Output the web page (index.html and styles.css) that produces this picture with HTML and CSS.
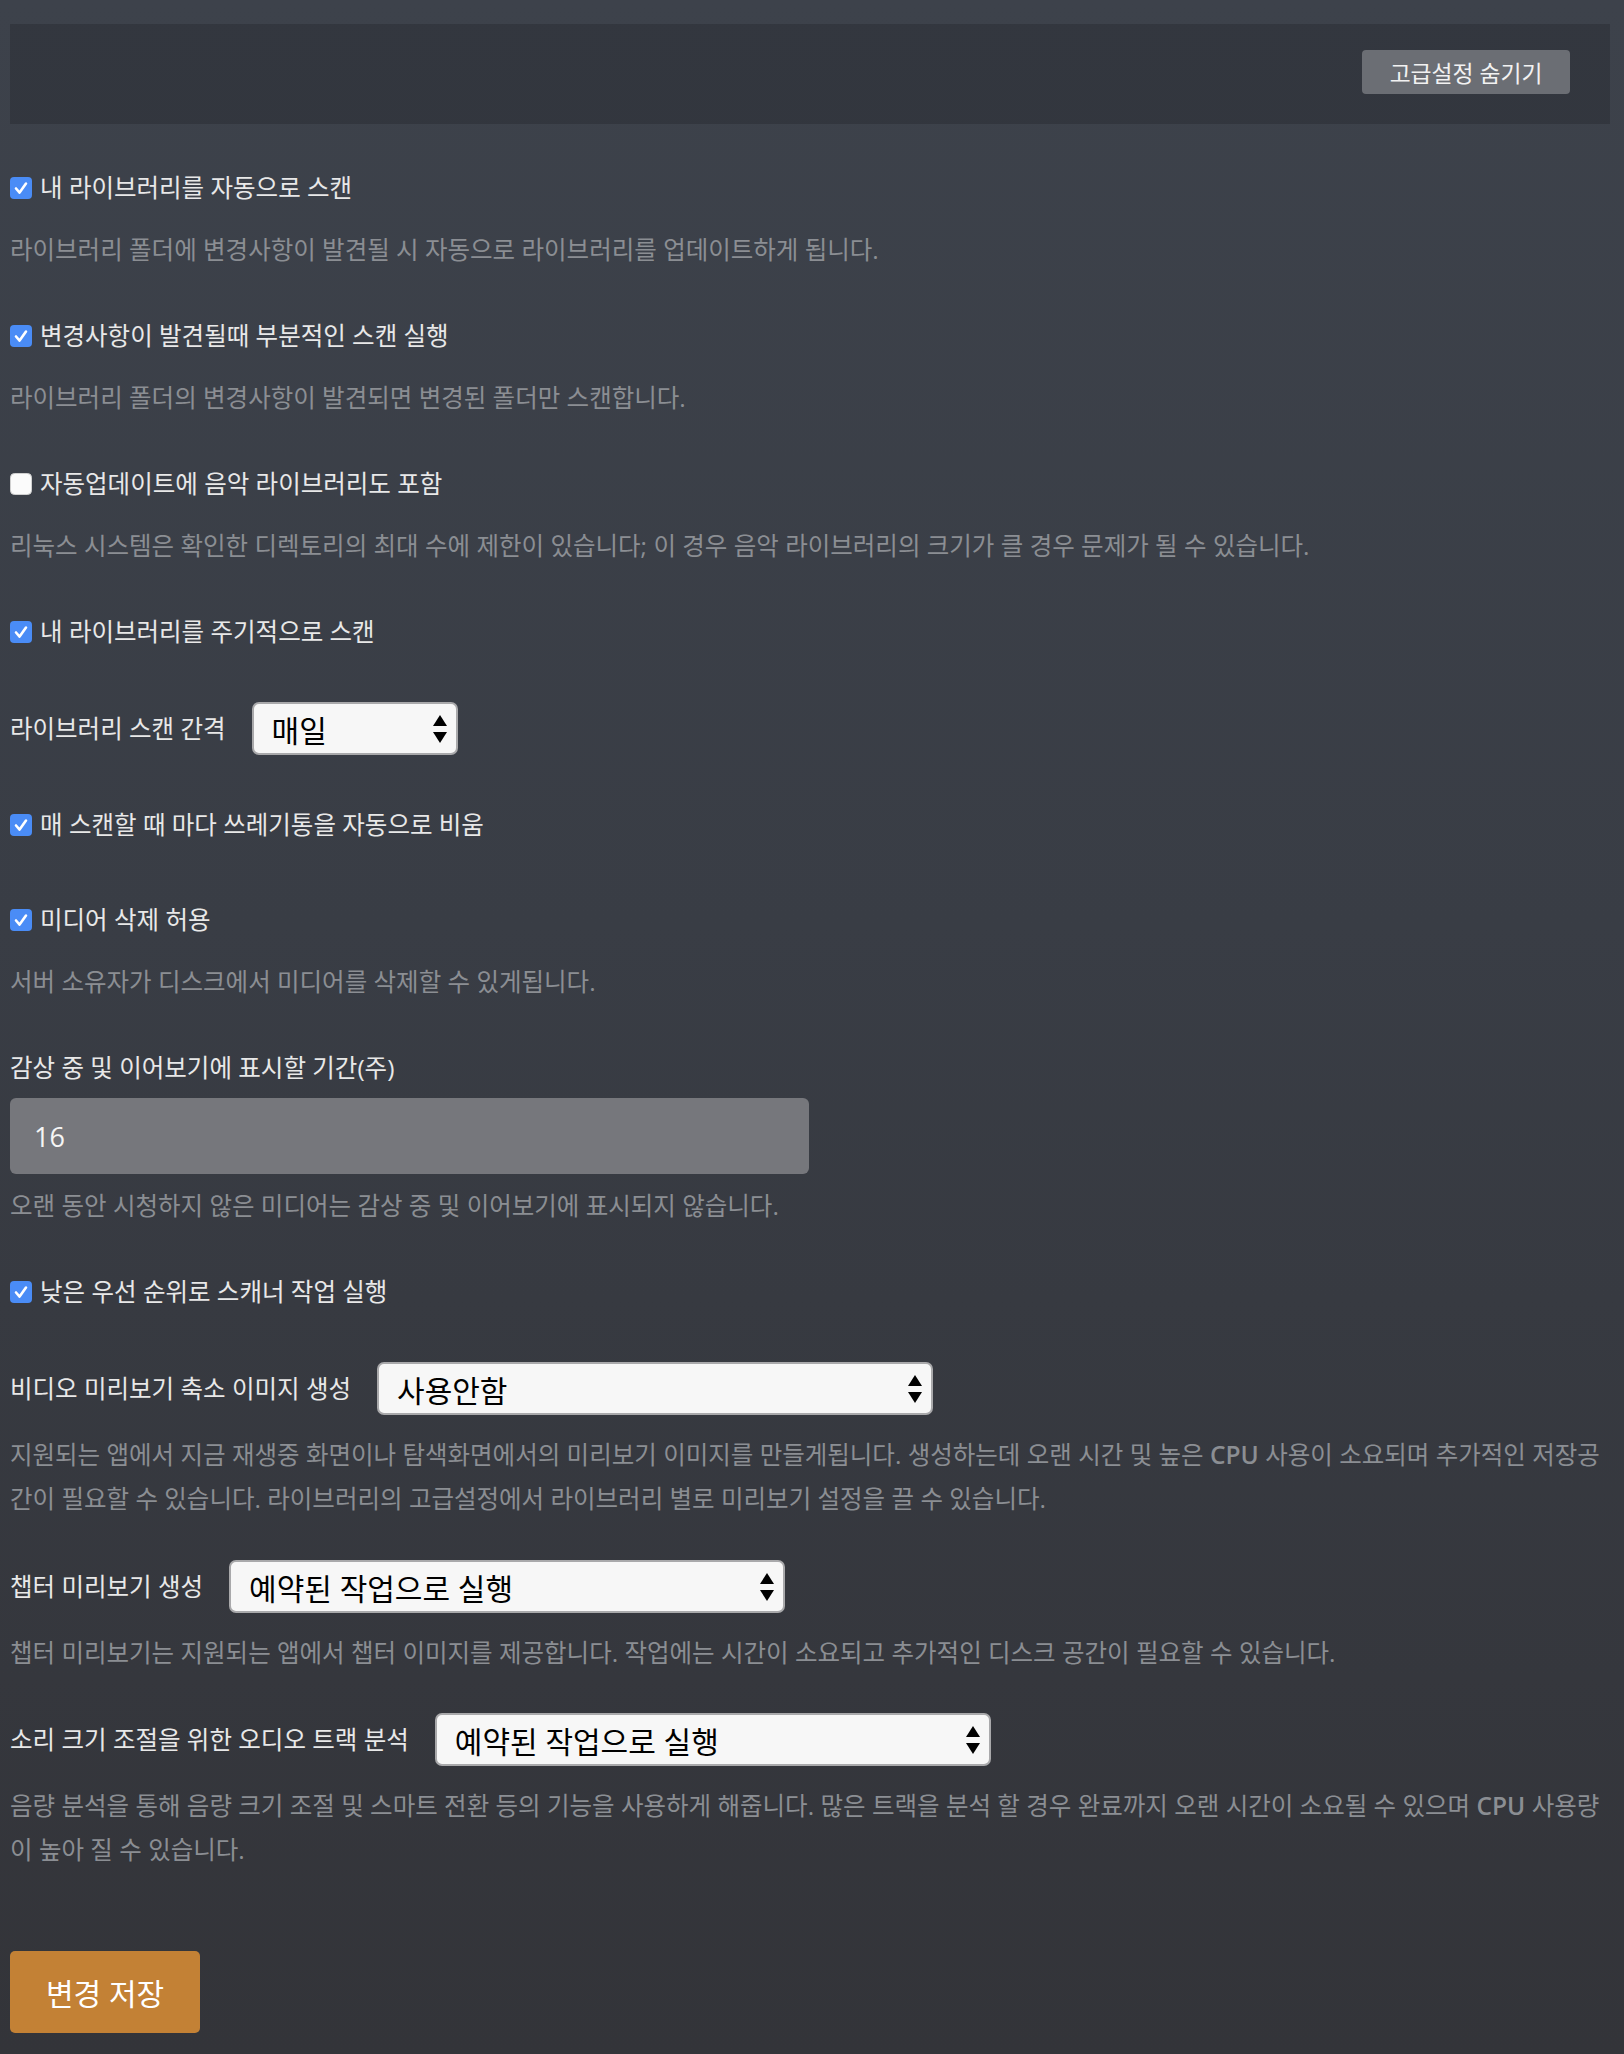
FILE: index.html
```html
<!DOCTYPE html>
<html lang="ko">
<head>
<meta charset="utf-8">
<title>라이브러리 설정</title>
<link rel="stylesheet" href="styles.css">
</head>
<body>
<div class="page">
  <div class="toolbar">
    <button class="btn-toggle" type="button">고급설정 숨기기</button>
  </div>

  <form class="settings">
    <div class="group">
      <label class="check"><span class="box"><svg viewBox="0 0 22 22" width="22" height="22"><rect x="0" y="0" width="22" height="22" rx="4" fill="#4a8cf6"/><path d="M6 11.5 L9.6 15.6 L16 6.6" fill="none" stroke="#fff" stroke-width="2.6" stroke-linecap="round" stroke-linejoin="round"/></svg></span>내 라이브러리를 자동으로 스캔</label>
      <p class="help">라이브러리 폴더에 변경사항이 발견될 시 자동으로 라이브러리를 업데이트하게 됩니다.</p>
    </div>

    <div class="group">
      <label class="check"><span class="box"><svg viewBox="0 0 22 22" width="22" height="22"><rect x="0" y="0" width="22" height="22" rx="4" fill="#4a8cf6"/><path d="M6 11.5 L9.6 15.6 L16 6.6" fill="none" stroke="#fff" stroke-width="2.6" stroke-linecap="round" stroke-linejoin="round"/></svg></span>변경사항이 발견될때 부분적인 스캔 실행</label>
      <p class="help">라이브러리 폴더의 변경사항이 발견되면 변경된 폴더만 스캔합니다.</p>
    </div>

    <div class="group">
      <label class="check"><span class="box"><svg viewBox="0 0 22 22" width="22" height="22"><rect x="0.5" y="0.5" width="21" height="21" rx="4" fill="#fbfbfb" stroke="#d0d0d0"/></svg></span>자동업데이트에 음악 라이브러리도 포함</label>
      <p class="help">리눅스 시스템은 확인한 디렉토리의 최대 수에 제한이 있습니다; 이 경우 음악 라이브러리의 크기가 클 경우 문제가 될 수 있습니다.</p>
    </div>

    <div class="group nohelp">
      <label class="check"><span class="box"><svg viewBox="0 0 22 22" width="22" height="22"><rect x="0" y="0" width="22" height="22" rx="4" fill="#4a8cf6"/><path d="M6 11.5 L9.6 15.6 L16 6.6" fill="none" stroke="#fff" stroke-width="2.6" stroke-linecap="round" stroke-linejoin="round"/></svg></span>내 라이브러리를 주기적으로 스캔</label>
    </div>

    <div class="group nohelp">
      <div class="inline">
        <span class="label">라이브러리 스캔 간격</span>
        <div class="select select-sm"><span>매일</span><svg viewBox="0 0 14 28" width="14" height="28"><polygon points="7,0 14,11 0,11" fill="#000"/><polygon points="0,17 14,17 7,28" fill="#000"/></svg></div>
      </div>
    </div>

    <div class="group nohelp loose">
      <label class="check"><span class="box"><svg viewBox="0 0 22 22" width="22" height="22"><rect x="0" y="0" width="22" height="22" rx="4" fill="#4a8cf6"/><path d="M6 11.5 L9.6 15.6 L16 6.6" fill="none" stroke="#fff" stroke-width="2.6" stroke-linecap="round" stroke-linejoin="round"/></svg></span>매 스캔할 때 마다 쓰레기통을 자동으로 비움</label>
    </div>

    <div class="group">
      <label class="check"><span class="box"><svg viewBox="0 0 22 22" width="22" height="22"><rect x="0" y="0" width="22" height="22" rx="4" fill="#4a8cf6"/><path d="M6 11.5 L9.6 15.6 L16 6.6" fill="none" stroke="#fff" stroke-width="2.6" stroke-linecap="round" stroke-linejoin="round"/></svg></span>미디어 삭제 허용</label>
      <p class="help">서버 소유자가 디스크에서 미디어를 삭제할 수 있게됩니다.</p>
    </div>

    <div class="group">
      <span class="label block">감상 중 및 이어보기에 표시할 기간(주)</span>
      <div class="text-input">16</div>
      <p class="help help-input">오랜 동안 시청하지 않은 미디어는 감상 중 및 이어보기에 표시되지 않습니다.</p>
    </div>

    <div class="group nohelp">
      <label class="check"><span class="box"><svg viewBox="0 0 22 22" width="22" height="22"><rect x="0" y="0" width="22" height="22" rx="4" fill="#4a8cf6"/><path d="M6 11.5 L9.6 15.6 L16 6.6" fill="none" stroke="#fff" stroke-width="2.6" stroke-linecap="round" stroke-linejoin="round"/></svg></span>낮은 우선 순위로 스캐너 작업 실행</label>
    </div>

    <div class="group snug">
      <div class="inline">
        <span class="label">비디오 미리보기 축소 이미지 생성</span>
        <div class="select select-lg"><span>사용안함</span><svg viewBox="0 0 14 28" width="14" height="28"><polygon points="7,0 14,11 0,11" fill="#000"/><polygon points="0,17 14,17 7,28" fill="#000"/></svg></div>
      </div>
      <p class="help help-select">지원되는 앱에서 지금 재생중 화면이나 탐색화면에서의 미리보기 이미지를 만들게됩니다. 생성하는데 오랜 시간 및 높은 <span class="latin">CPU</span> 사용이 소요되며 추가적인 저장공간이 필요할 수 있습니다. 라이브러리의 고급설정에서 라이브러리 별로 미리보기 설정을 끌 수 있습니다.</p>
    </div>

    <div class="group tight">
      <div class="inline">
        <span class="label">챕터 미리보기 생성</span>
        <div class="select select-lg"><span>예약된 작업으로 실행</span><svg viewBox="0 0 14 28" width="14" height="28"><polygon points="7,0 14,11 0,11" fill="#000"/><polygon points="0,17 14,17 7,28" fill="#000"/></svg></div>
      </div>
      <p class="help help-select">챕터 미리보기는 지원되는 앱에서 챕터 이미지를 제공합니다. 작업에는 시간이 소요되고 추가적인 디스크 공간이 필요할 수 있습니다.</p>
    </div>

    <div class="group">
      <div class="inline">
        <span class="label">소리 크기 조절을 위한 오디오 트랙 분석</span>
        <div class="select select-lg"><span>예약된 작업으로 실행</span><svg viewBox="0 0 14 28" width="14" height="28"><polygon points="7,0 14,11 0,11" fill="#000"/><polygon points="0,17 14,17 7,28" fill="#000"/></svg></div>
      </div>
      <p class="help help-select">음량 분석을 통해 음량 크기 조절 및 스마트 전환 등의 기능을 사용하게 해줍니다. 많은 트랙을 분석 할 경우 완료까지 오랜 시간이 소요될 수 있으며 <span class="latin">CPU</span> 사용량이 높아 질 수 있습니다.</p>
    </div>

    <button class="btn-save" type="button">변경 저장</button>
  </form>
</div>
</body>
</html>
```

FILE: styles.css
```css
html, body {
  margin: 0;
  padding: 0;
}

body {
  min-height: 2054px;
  background: linear-gradient(180deg, #3d424b 0%, #393d45 45%, #333439 100%);
  font-family: "Open Sans", "Noto Sans CJK KR", sans-serif;
  color: #e6e6e6;
  font-size: 24.5px;
}

.page {
  width: 1600px;
  padding: 24px 0 0 10px;
}

.toolbar {
  height: 100px;
  background: rgba(20, 22, 26, 0.24);
  display: flex;
  align-items: flex-start;
  justify-content: flex-end;
  padding: 26px 40px 0 0;
  box-sizing: border-box;
}

.btn-toggle {
  width: 208px;
  height: 44px;
  border: none;
  border-radius: 4px;
  background: #6b6e74;
  color: #f2f2f2;
  font-family: "Open Sans", "Noto Sans CJK KR", sans-serif;
  font-size: 22.8px;
  padding: 0;
}

.settings {
  padding-top: 42px;
}

.group {
  margin-bottom: 42px;
}

.group.nohelp {
  margin-bottom: 48px;
}

.group.loose {
  margin-bottom: 51px;
}

.group.snug {
  margin-bottom: 39px;
}

.group.tight {
  margin-bottom: 38px;
}

.check {
  display: flex;
  align-items: center;
  height: 44px;
  line-height: 44px;
  color: #e8e8e8;
}

.box {
  width: 22px;
  height: 22px;
  margin-right: 8px;
  display: flex;
}

.label {
  line-height: 44px;
  color: #e8e8e8;
}

.label.block {
  display: block;
}

.help {
  margin: 18px 0 0;
  line-height: 44px;
  color: #8b8e93;
}

.help-select {
  margin-top: 18px;
}

.help-input {
  margin-top: 10px;
}

.latin {
  font-weight: 600;
}

.inline {
  display: flex;
  align-items: center;
  height: 53px;
}

.select {
  display: flex;
  align-items: center;
  justify-content: space-between;
  height: 53px;
  box-sizing: border-box;
  margin-left: 26px;
  padding: 0 9px 0 18px;
  background: #f7f7f7;
  border: 2px solid #a9a9ab;
  border-radius: 7px;
  color: #000;
  font-size: 30px;
}

.select-sm {
  width: 206px;
}

.select-lg {
  width: 556px;
}

.text-input {
  margin-top: 8px;
  width: 799px;
  height: 76px;
  box-sizing: border-box;
  padding-left: 24px;
  display: flex;
  align-items: center;
  background: #76777c;
  border-radius: 6px;
  color: #f5f5f5;
  font-size: 27px;
  font-weight: 500;
}

.btn-save {
  margin-top: 37px;
  width: 190px;
  height: 82px;
  border: none;
  border-radius: 5px;
  background: #c38135;
  color: #fff;
  font-family: "Open Sans", "Noto Sans CJK KR", sans-serif;
  font-size: 30px;
  padding: 0;
}
```
